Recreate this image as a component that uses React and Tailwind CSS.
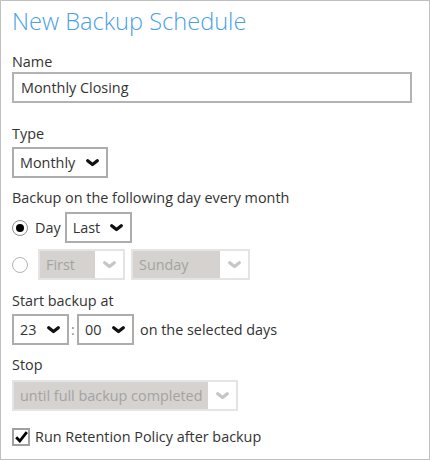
import React from 'react';

const Chevron = ({ disabled }) => (
  <svg width="13" height="8" viewBox="0 0 13 8" className="shrink-0">
    <path
      d="M1.7 1.7 L6.5 5.6 L11.3 1.7"
      fill="none"
      stroke={disabled ? '#c6c6c6' : '#111'}
      strokeWidth="3.2"
      strokeLinecap="round"
      strokeLinejoin="round"
    />
  </svg>
);

function Select({ value, width, disabled }) {
  if (disabled) {
    return (
      <div className={`flex h-[31px] border-2 border-[#e4e4e4] bg-white ${width}`}>
        <div className="flex flex-1 items-center bg-[#d5d2cf] pl-[6px] text-[#a3a3a3]">{value}</div>
        <div className="flex w-[28px] items-center justify-center">
          <Chevron disabled />
        </div>
      </div>
    );
  }
  return (
    <div className={`flex h-[31px] items-center justify-between border-2 border-[#adadad] bg-white pl-[6px] pr-[7px] text-[#333] ${width}`}>
      <span>{value}</span>
      <Chevron />
    </div>
  );
}

export default function App() {
  return (
    <div className="h-[460px] w-[430px] border border-[#c0c0c0] bg-white px-[11px] font-['Open_Sans',sans-serif] text-[14.4px] leading-[20px] text-[#333]">
      <h1 className="mt-[5px] text-[23.6px] font-light leading-[30px] text-[#4a9fe9]">New Backup Schedule</h1>

      <div className="mt-[16px]">Name</div>
      <div className="flex h-[31px] w-[400px] items-center border-2 border-[#b3b3b3] pl-[7px]">Monthly Closing</div>

      <div className="mt-[21px]">Type</div>
      <div className="mt-[3px]">
        <Select value="Monthly" width="w-[96px]" />
      </div>

      <div className="mt-[10px]">Backup on the following day every month</div>
      <div className="mt-[4px] flex items-center">
        <div className="flex h-[16px] w-[16px] items-center justify-center rounded-full border border-[#8c8c8c]">
          <div className="h-[8px] w-[8px] rounded-full bg-black" />
        </div>
        <span className="ml-[7px] mr-[4px]">Day</span>
        <Select value="Last" width="w-[67px]" />
      </div>
      <div className="mt-[6px] flex items-center">
        <div className="h-[16px] w-[16px] rounded-full border border-[#b5b5b5]" />
        <div className="ml-[10px]">
          <Select value="First" width="w-[87px]" disabled />
        </div>
        <div className="ml-[6px]">
          <Select value="Sunday" width="w-[119px]" disabled />
        </div>
      </div>

      <div className="mt-[11px]">Start backup at</div>
      <div className="mt-[3px] flex items-center">
        <Select value="23" width="w-[57px]" />
        <span className="w-[8px] text-center text-[#888]">:</span>
        <Select value="00" width="w-[57px]" />
        <span className="ml-[6px]">on the selected days</span>
      </div>

      <div className="mt-[10px]">Stop</div>
      <div className="mt-[5px]">
        <Select value="until full backup completed" width="w-[226px]" disabled />
      </div>

      <div className="mt-[16px] flex items-center">
        <div className="flex h-[18px] w-[18px] items-center justify-center border-2 border-[#a0a0a0]">
          <svg width="13" height="12" viewBox="0 0 13 12">
            <path d="M1.2 6.2 L4.8 10 L11.8 1.2" stroke="#000" strokeWidth="2.8" fill="none" />
          </svg>
        </div>
        <span className="ml-[5px]">Run Retention Policy after backup</span>
      </div>
    </div>
  );
}
